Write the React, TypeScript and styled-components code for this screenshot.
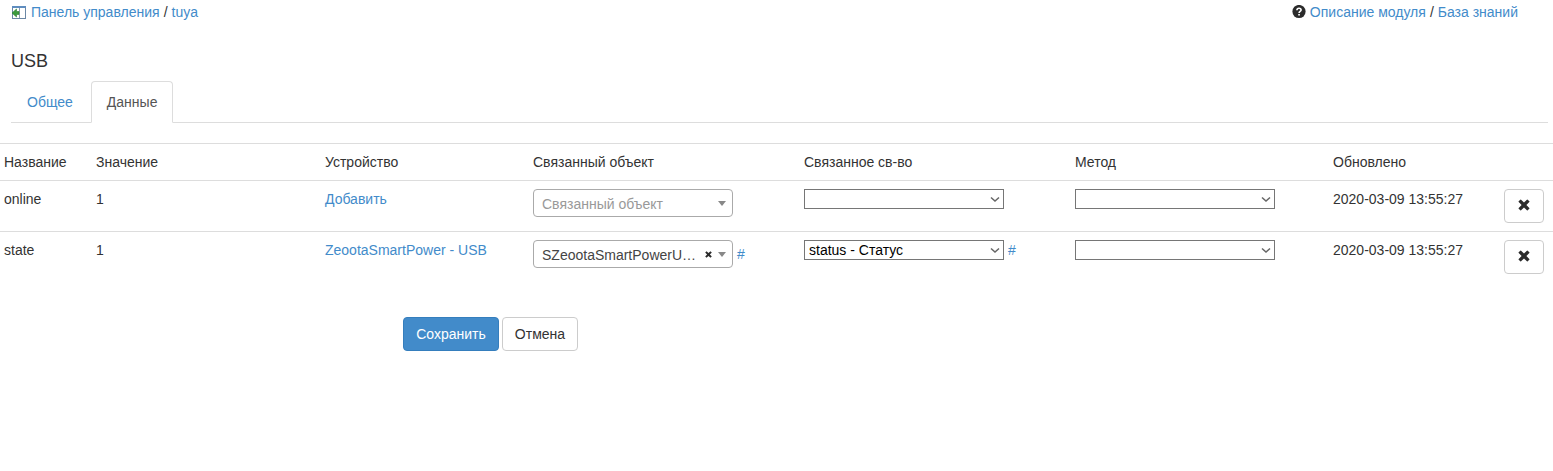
import React from "react";
import styled, { createGlobalStyle } from "styled-components";

const GlobalStyle = createGlobalStyle`
  * { box-sizing: border-box; }
  body {
    margin: 0;
    background: #fff;
    color: #333;
    font: 14px/20px "Liberation Sans", Arial, sans-serif;
  }
`;

const Page = styled.main`
  padding: 2px 0 20px;
`;

const TopBar = styled.header`
  display: flex;
  flex-wrap: wrap;
  justify-content: space-between;
  padding: 0 35px 0 11px;
`;

const LinkGroup = styled.nav`
  display: flex;
  align-items: center;
  gap: 4px;
`;

const Link = styled.a`
  color: #428bca;
  text-decoration: none;
  &:hover { text-decoration: underline; }
`;

const Title = styled.h1`
  margin: 29px 11px 10px;
  font-size: 18px;
  font-weight: 400;
  line-height: 20px;
`;

const Tabs = styled.nav`
  display: flex;
  margin: 0 5px 20px 11px;
  border-bottom: 1px solid #ddd;
`;

const Tab = styled.a<{ $active?: boolean }>`
  margin: 0 2px -1px 0;
  padding: 10px 15px;
  border: 1px solid;
  border-color: ${(p) => (p.$active ? "#ddd #ddd #fff" : "transparent")};
  border-radius: 4px 4px 0 0;
  background: ${(p) => (p.$active ? "#fff" : "transparent")};
  color: ${(p) => (p.$active ? "#555" : "#428bca")};
  text-decoration: none;
`;

const Table = styled.table`
  width: 100%;
  table-layout: fixed;
  border-spacing: 0;
`;

const Column = styled.col<{ $width?: number }>`
  width: ${(p) => (p.$width ? `${p.$width}px` : "auto")};
`;

const HeadCell = styled.th`
  padding: 8px 4px;
  border-top: 1px solid #ddd;
  font-weight: 400;
  text-align: left;
`;

const Cell = styled.td`
  padding: 8px 4px;
  border-top: 1px solid #ddd;
  vertical-align: top;
`;

const Field = styled.div`
  display: flex;
  align-items: center;
  gap: 4px;
`;

const SelectBox = styled.div`
  position: relative;
  width: 200px;
`;

const PlainSelect = styled.select`
  display: block;
  width: 100%;
  height: 20px;
  padding: 0 20px 0 4px;
  border: 1px solid #767676;
  border-radius: 0;
  appearance: none;
  background: #fff;
  color: #000;
  font: inherit;
  line-height: 18px;
`;

const ObjectSelect = styled.select<{ $empty: boolean }>`
  display: block;
  width: 100%;
  height: 28px;
  padding: 2px 32px 0 8px;
  border: 1px solid #aaa;
  border-radius: 4px;
  appearance: none;
  background: #fff;
  color: ${(p) => (p.$empty ? "#999" : "#444")};
  font: inherit;
  overflow: hidden;
  text-overflow: ellipsis;
  white-space: nowrap;
`;

const Chevron = styled.svg`
  position: absolute;
  top: 7px;
  right: 4px;
  pointer-events: none;
`;

const Caret = styled.svg`
  position: absolute;
  top: 12px;
  right: 7px;
  pointer-events: none;
`;

const ClearButton = styled.button`
  position: absolute;
  top: 8px;
  right: 19px;
  display: flex;
  align-items: center;
  justify-content: center;
  width: 12px;
  height: 12px;
  padding: 0;
  border: 0;
  background: none;
  cursor: pointer;
`;

const Button = styled.button<{ $primary?: boolean }>`
  padding: 6px 12px;
  border: 1px solid ${(p) => (p.$primary ? "#357ebd" : "#ccc")};
  border-radius: 4px;
  background: ${(p) => (p.$primary ? "#428bca" : "#fff")};
  color: ${(p) => (p.$primary ? "#fff" : "#333")};
  font: inherit;
  cursor: pointer;
`;

const RemoveButton = styled(Button)`
  display: flex;
  align-items: center;
  justify-content: center;
  width: 40px;
  height: 34px;
  padding: 0 0 2px;
`;

const Actions = styled.div`
  display: flex;
  gap: 3px;
  margin: 35px 0 0 25%;
  padding: 0 15px;
`;

const PanelIcon = () => (
  <svg width="16" height="16" viewBox="0 0 16 16" aria-hidden="true">
    <rect x="1.5" y="2.5" width="13" height="12" fill="#fff" stroke="#6b87a5" />
    <rect x="1" y="2" width="14" height="2" fill="#5f8dbf" />
    <path d="M8.5 4V14" stroke="#8b9cad" />
    <path d="M1 9l4.5-4v2.5H8v3H5.5V13z" fill="#3c9b3c" stroke="#2c7d30" strokeWidth=".6" />
  </svg>
);

const QuestionIcon = () => (
  <svg width="14" height="14" viewBox="0 0 14 14" aria-hidden="true">
    <circle cx="7" cy="6.5" r="6.6" fill="#2b2b2b" />
    <path d="M4.9 5.3C5 3.8 5.8 3.2 7 3.2s2.1.7 2.1 1.8c0 1.4-2 1.4-2 2.9" fill="none" stroke="#fff" strokeWidth="1.6" />
    <path d="M6.2 8.9h1.7v1.6H6.2z" fill="#fff" />
  </svg>
);

const CrossIcon = ({ size }: { size: number }) => (
  <svg width={size} height={size} viewBox="0 0 12 12" aria-hidden="true">
    <path
      d="M3.1.7 6 3.6 8.9.7q.4-.4.8 0l1.6 1.6q.4.4 0 .8L8.4 6l2.9 2.9q.4.4 0 .8l-1.6 1.6q-.4.4-.8 0L6 8.4l-2.9 2.9q-.4.4-.8 0L.7 9.7q-.4-.4 0-.8L3.6 6 .7 3.1q-.4-.4 0-.8L2.3.7q.4-.4.8 0z"
      fill="#2b2b2b"
    />
  </svg>
);

const ChevronSelect = ({ label, value = "" }: { label: string; value?: string }) => (
  <SelectBox>
    <PlainSelect aria-label={label} defaultValue={value}>
      <option value={value}>{value}</option>
    </PlainSelect>
    <Chevron width="10" height="7" viewBox="0 0 10 7" aria-hidden="true">
      <path d="M1 1.5l4 3.6 4-3.6" fill="none" stroke="#666" strokeWidth="1.5" />
    </Chevron>
  </SelectBox>
);

const LinkedObject = ({ value }: { value?: string }) => (
  <SelectBox>
    <ObjectSelect aria-label="Связанный объект" $empty={!value}>
      <option>{value ?? "Связанный объект"}</option>
    </ObjectSelect>
    {value && (
      <ClearButton type="button" aria-label="Очистить">
        <CrossIcon size={7} />
      </ClearButton>
    )}
    <Caret width="8" height="5" viewBox="0 0 8 5" aria-hidden="true">
      <path d="M0 0h8L4 5z" fill="#888" />
    </Caret>
  </SelectBox>
);

type Item = { name: string; value: string; device: string; object?: string; property?: string; updated: string };

const items: Item[] = [
  { name: "online", value: "1", device: "Добавить", updated: "2020-03-09 13:55:27" },
  {
    name: "state",
    value: "1",
    device: "ZeootaSmartPower - USB",
    object: "SZeootaSmartPowerUSB",
    property: "status - Статус",
    updated: "2020-03-09 13:55:27",
  },
];

const headings = ["Название", "Значение", "Устройство", "Связанный объект", "Связанное св-во", "Метод", "Обновлено"];
const widths = [92, undefined, 208, 271, 271, 258, 171, 53];

export default function App() {
  return (
    <>
      <GlobalStyle />
      <Page>
        <TopBar>
          <LinkGroup>
            <PanelIcon />
            <Link href="#panel">Панель управления</Link>
            <span>/</span>
            <Link href="#tuya">tuya</Link>
          </LinkGroup>
          <LinkGroup>
            <QuestionIcon />
            <Link href="#module">Описание модуля</Link>
            <span>/</span>
            <Link href="#kb">База знаний</Link>
          </LinkGroup>
        </TopBar>
        <Title>USB</Title>
        <Tabs>
          <Tab href="#general">Общее</Tab>
          <Tab href="#data" $active aria-current="page">Данные</Tab>
        </Tabs>
        <form onSubmit={(e) => e.preventDefault()}>
          <Table>
            <colgroup>
              {widths.map((w, i) => <Column key={i} $width={w} />)}
            </colgroup>
            <thead>
              <tr>
                {headings.map((h) => <HeadCell key={h} scope="col">{h}</HeadCell>)}
                <HeadCell as="td" />
              </tr>
            </thead>
            <tbody>
              {items.map((item) => (
                <tr key={item.name}>
                  <Cell>{item.name}</Cell>
                  <Cell>{item.value}</Cell>
                  <Cell><Link href="#device">{item.device}</Link></Cell>
                  <Cell>
                    <Field>
                      <LinkedObject value={item.object} />
                      {item.object && <Link href="#object">#</Link>}
                    </Field>
                  </Cell>
                  <Cell>
                    <Field>
                      <ChevronSelect label="Связанное св-во" value={item.property} />
                      {item.property && <Link href="#property">#</Link>}
                    </Field>
                  </Cell>
                  <Cell><ChevronSelect label="Метод" /></Cell>
                  <Cell>{item.updated}</Cell>
                  <Cell>
                    <RemoveButton type="button" aria-label="Удалить"><CrossIcon size={12} /></RemoveButton>
                  </Cell>
                </tr>
              ))}
            </tbody>
          </Table>
          <Actions>
            <Button type="submit" $primary>Сохранить</Button>
            <Button type="button">Отмена</Button>
          </Actions>
        </form>
      </Page>
    </>
  );
}
